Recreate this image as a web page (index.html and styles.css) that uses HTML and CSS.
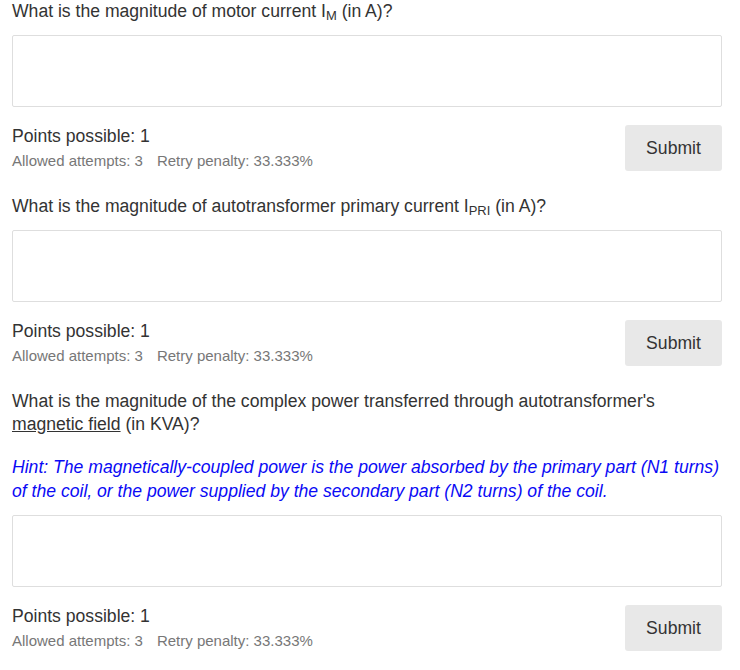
FILE: index.html
```html
<!DOCTYPE html>
<html>
<head>
<meta charset="utf-8">
<link rel="stylesheet" href="styles.css">
</head>
<body>
<div class="page">
  <section class="problem">
    <p class="question">What is the magnitude of motor current I<sub>M</sub> (in A)?</p>
    <div class="answer"></div>
    <div class="footer">
      <div class="meta">
        <div class="points">Points possible: 1</div>
        <div class="attempts"><span>Allowed attempts: 3</span><span class="penalty">Retry penalty: 33.333%</span></div>
      </div>
      <button class="submit">Submit</button>
    </div>
  </section>
  <section class="problem">
    <p class="question">What is the magnitude of autotransformer primary current I<sub>PRI</sub> (in A)?</p>
    <div class="answer"></div>
    <div class="footer">
      <div class="meta">
        <div class="points">Points possible: 1</div>
        <div class="attempts"><span>Allowed attempts: 3</span><span class="penalty">Retry penalty: 33.333%</span></div>
      </div>
      <button class="submit">Submit</button>
    </div>
  </section>
  <section class="problem">
    <p class="question">What is the magnitude of the complex power transferred through autotransformer's <a class="term" href="#">magnetic field</a> (in KVA)?</p>
    <p class="hint">Hint: The magnetically-coupled power is the power absorbed by the primary part (N1 turns) of the coil, or the power supplied by the secondary part (N2 turns) of the coil.</p>
    <div class="answer"></div>
    <div class="footer">
      <div class="meta">
        <div class="points">Points possible: 1</div>
        <div class="attempts"><span>Allowed attempts: 3</span><span class="penalty">Retry penalty: 33.333%</span></div>
      </div>
      <button class="submit">Submit</button>
    </div>
  </section>
</div>
</body>
</html>
```

FILE: styles.css
```css
html, body {
  margin: 0;
  padding: 0;
  background: #fff;
}
body {
  font-family: "Liberation Sans", Arial, sans-serif;
  color: #333;
}
.page {
  padding: 0 18px 0 12px;
}
.problem + .problem {
  margin-top: 24px;
}
.question {
  margin: 0;
  font-size: 17.6px;
  line-height: 23px;
  color: #333;
}
.question sub {
  font-size: 13px;
  line-height: 0;
  vertical-align: -3px;
}
.term {
  color: #333;
  text-decoration: underline;
}
.hint {
  margin: 19px 0 0;
  font-size: 17.6px;
  line-height: 24px;
  font-style: italic;
  color: #0a0af5;
}
.answer {
  margin-top: 12px;
  height: 70px;
  border: 1px solid #dedede;
  border-radius: 2px;
  background: #fff;
}
.footer {
  margin-top: 18px;
  display: flex;
  justify-content: space-between;
  align-items: flex-start;
}
.points {
  font-size: 17.6px;
  line-height: 22px;
  color: #333;
}
.attempts {
  margin-top: 4px;
  font-size: 15px;
  line-height: 20px;
  color: #777;
}
.penalty {
  margin-left: 14px;
}
.submit {
  width: 97px;
  height: 46px;
  border: none;
  border-radius: 3px;
  background: #e8e8e8;
  color: #333;
  font-family: "Liberation Sans", Arial, sans-serif;
  font-size: 17.6px;
  padding: 0;
}
```
